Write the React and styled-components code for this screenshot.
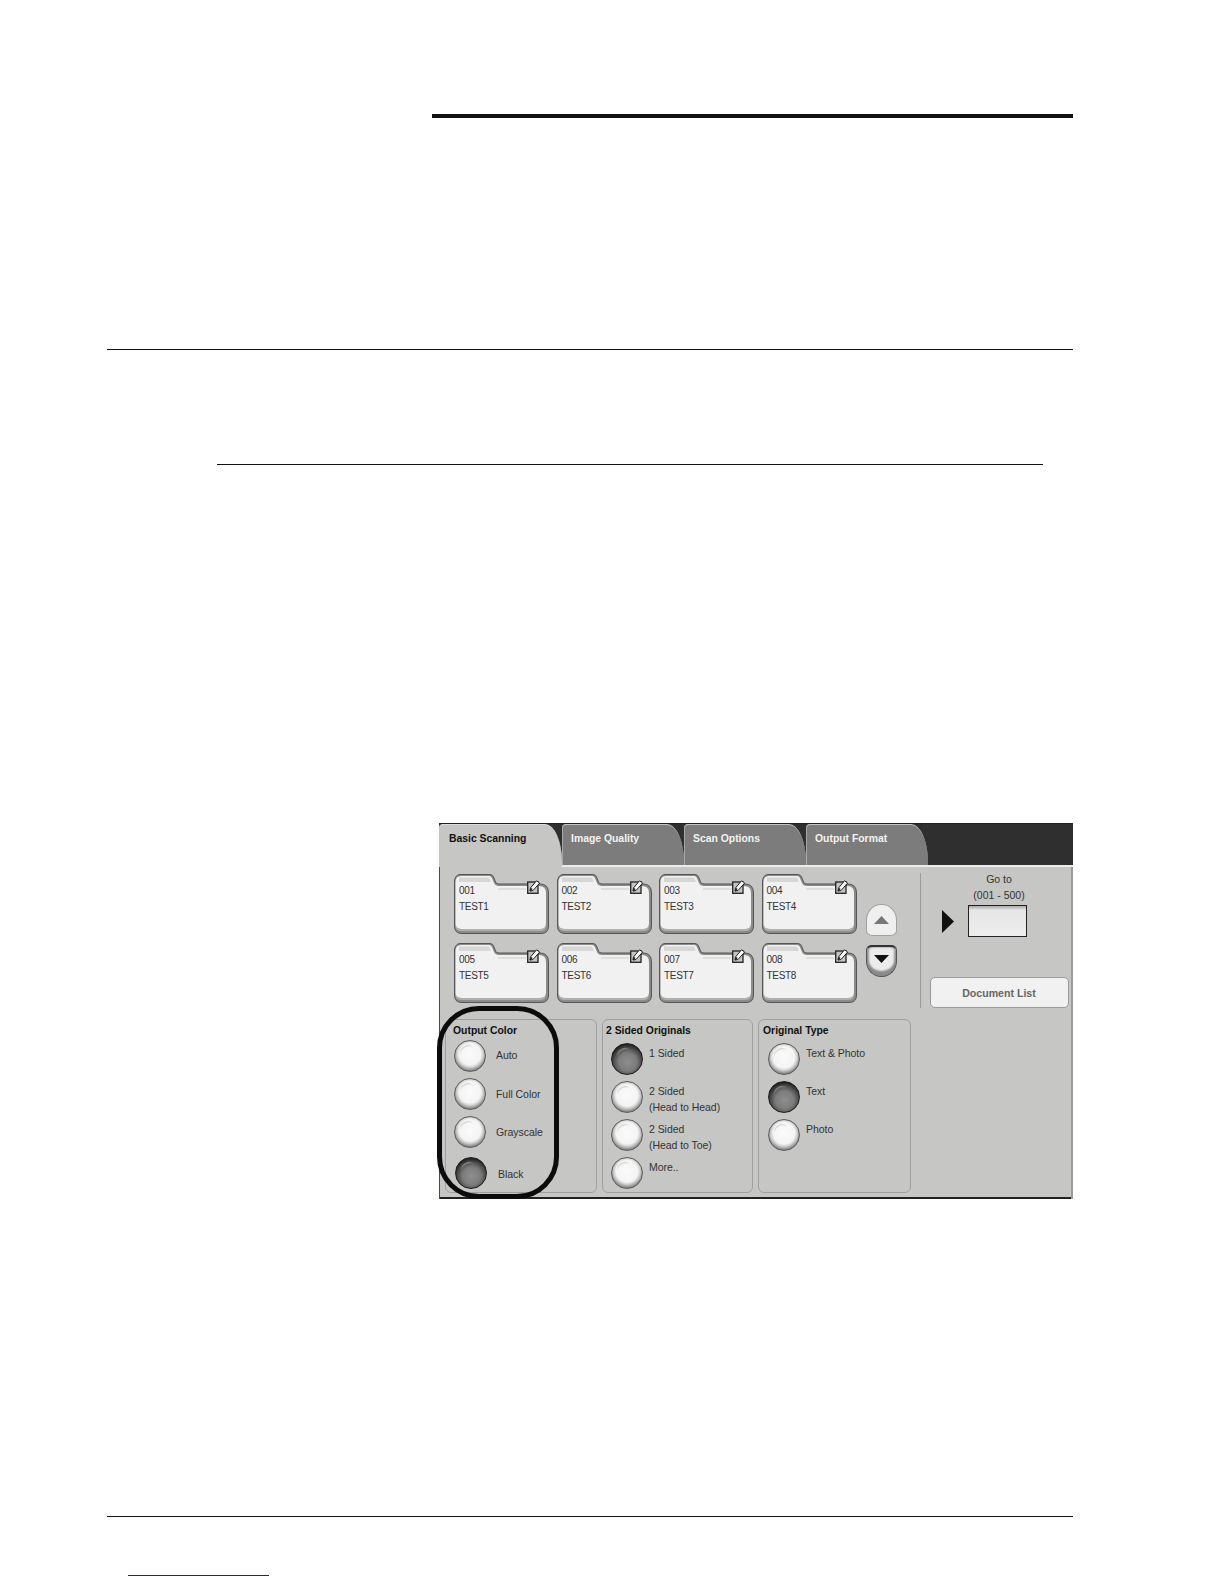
import React from 'react';
import styled, { createGlobalStyle } from 'styled-components';

const TABS = ['Basic Scanning', 'Image Quality', 'Scan Options', 'Output Format'];

const FOLDERS = [
  ['001', 'TEST1'],
  ['002', 'TEST2'],
  ['003', 'TEST3'],
  ['004', 'TEST4'],
  ['005', 'TEST5'],
  ['006', 'TEST6'],
  ['007', 'TEST7'],
  ['008', 'TEST8'],
];

const GROUPS = [
  {
    title: 'Output Color',
    width: 152,
    titleLeft: 7,
    listLeft: 1,
    listTop: 2,
    gap: 10,
    rows: [
      { label: ['Auto'], height: 38, labelTop: 7 },
      { label: ['Full Color'], height: 38, labelTop: 8 },
      { label: ['Grayscale'], height: 41, labelTop: 8 },
      { label: ['Black'], height: 32, labelTop: 9, on: true, nudge: 1 },
    ],
  },
  {
    title: '2 Sided Originals',
    width: 151,
    titleLeft: 3,
    listLeft: 5,
    listTop: 5,
    gap: 6,
    rows: [
      { label: ['1 Sided'], height: 38, on: true },
      { label: ['2 Sided', '(Head to Head)'], height: 38 },
      { label: ['2 Sided', '(Head to Toe)'], height: 38 },
      { label: ['More..'], height: 32 },
    ],
  },
  {
    title: 'Original Type',
    width: 153,
    titleLeft: 4,
    listLeft: 5,
    listTop: 5,
    gap: 6,
    rows: [
      { label: ['Text & Photo'], height: 38 },
      { label: ['Text'], height: 38, on: true },
      { label: ['Photo'], height: 38 },
    ],
  },
];

const FolderShape = () => (
  <FolderSvg viewBox="0 0 95 60" aria-hidden="true">
    <path
      d="M0.5 7 Q1 1 6 0.5 L36 0.5 Q39 0.5 40 4 L41.5 8 Q42 10 45 10 L86 10 Q94.5 10 94.5 19 L94.5 52 Q94.5 59.5 87 59.5 L8 59.5 Q0.5 59.5 0.5 52 Z"
      fill="#8c8c8c"
      stroke="#555"
    />
    <path
      d="M1.5 8 Q1.5 2 7 2 L35 2 Q37.5 2 38.5 5.5 L40 9 Q41 12 45 12 L85 12 Q92 12 92 19 L92 50 Q92 55 86 55 L8 55 Q1.5 55 1.5 50 Z"
      fill="#f1f1f1"
    />
    <path d="M5 3.5 L35 3.5 L37 8 L5 8 Z" fill="#d6d6d6" />
    <path d="M44 14 L72 14 L72 16 L44 16 Z" fill="#dedede" />
    <path d="M1.5 50 Q1.5 55 8 55 L86 55 Q92 55 92 50 L92 52 Q92 57 86 57 L8 57 Q1.5 57 1.5 52 Z" fill="#b0b0b0" />
  </FolderSvg>
);

const EditIcon = () => (
  <EditSvg viewBox="0 0 13 14" aria-hidden="true">
    <rect x="0.7" y="2" width="10.3" height="11.3" fill="#c4c4c4" stroke="#222" strokeWidth="1.3" />
    <path d="M3 11 L3.5 8 L9.5 0.8 L12.7 3 L6 10.5 Z" fill="#f9f9f9" stroke="#222" strokeWidth="1" />
    <path d="M3.2 11 L5 8.5" stroke="#222" strokeWidth="1.4" />
  </EditSvg>
);

const App = () => (
  <Page>
    <GlobalStyle />
    <Rule $left={432} $width={641} $height={4} $top={0} />
    <Rule $left={107} $width={966} $height={1} $top={231} />
    <Rule $left={217} $width={826} $height={1} $top={114} />
    <Panel>
      <TabBar>
        {TABS.map((tab, i) => (
          <Tab key={tab} $active={i === 0}>
            {tab}
          </Tab>
        ))}
      </TabBar>
      <Upper>
        <FolderGrid>
          {FOLDERS.map(([num, name]) => (
            <Folder key={num}>
              <FolderShape />
              <EditIcon />
              <FolderLine>{num}</FolderLine>
              <FolderLine>{name}</FolderLine>
            </Folder>
          ))}
        </FolderGrid>
        <Arrows>
          <ArrowUp>
            <svg width="15" height="8" viewBox="0 0 15 8" aria-hidden="true">
              <path d="M7.5 0 L15 8 L0 8 Z" fill="#767676" />
            </svg>
          </ArrowUp>
          <ArrowDown>
            <svg width="15" height="8" viewBox="0 0 15 8" aria-hidden="true">
              <path d="M0 0 L15 0 L7.5 8 Z" fill="#111" />
            </svg>
          </ArrowDown>
        </Arrows>
        <Divider />
        <GoToColumn>
          <GoToLabel>Go to</GoToLabel>
          <GoToLabel>(001 - 500)</GoToLabel>
          <GoToRow>
            <svg width="12" height="23" viewBox="0 0 12 23" aria-hidden="true">
              <path d="M0 0 L12 11.5 L0 23 Z" fill="#111" />
            </svg>
            <GoToBox />
          </GoToRow>
          <ListButton>Document List</ListButton>
        </GoToColumn>
      </Upper>
      <Lower>
        {GROUPS.map((group) => (
          <Group key={group.title} $width={group.width}>
            <GroupTitle $left={group.titleLeft}>{group.title}</GroupTitle>
            <RadioList $left={group.titleLeft + group.listLeft} $top={group.listTop}>
              {group.rows.map((row) => (
                <RadioRow key={row.label.join()} $height={row.height} $nudge={row.nudge} $gap={group.gap}>
                  <Radio $on={row.on} />
                  <RadioLabel $top={row.labelTop}>
                    {row.label.map((line) => (
                      <div key={line}>{line}</div>
                    ))}
                  </RadioLabel>
                </RadioRow>
              ))}
            </RadioList>
          </Group>
        ))}
      </Lower>
      <Highlight />
    </Panel>
    <Rule $left={107} $width={966} $height={1} $top={317} />
    <Rule $left={128} $width={141} $height={1} $top={58} $color="#1c2290" />
  </Page>
);

export default App;

const GlobalStyle = createGlobalStyle`
  body {
    margin: 0;
    background: #fff;
    font-family: "Liberation Sans", Arial, sans-serif;
  }
`;

const Page = styled.div`
  width: 1224px;
  height: 1584px;
  padding-top: 114px;
  box-sizing: border-box;
  overflow: hidden;
`;

const Rule = styled.div`
  width: ${(p) => p.$width}px;
  height: ${(p) => p.$height}px;
  margin: ${(p) => p.$top}px 0 0 ${(p) => p.$left}px;
  background: ${(p) => p.$color || '#111'};
`;

const Panel = styled.div`
  position: relative;
  width: 634px;
  height: 376px;
  margin: 358px 0 0 439px;
  background: #c6c6c4;
  box-shadow: inset 1px 0 #4a4a4a, inset -2px 0 #9a9a9a, inset 0 -2px #222;
`;

const TabBar = styled.div`
  display: flex;
  height: 41px;
  background: #2f2f2f;
  border-bottom: 2px solid #ececec;
  border-top: 1px solid #222;
  box-sizing: content-box;
  margin-bottom: -1px;
`;

const Tab = styled.div`
  width: ${(p) => (p.$active ? 123 : 122)}px;
  height: ${(p) => (p.$active ? 43 : 41)}px;
  padding: 7px 0 0 ${(p) => (p.$active ? 10 : 9)}px;
  box-sizing: border-box;
  border-radius: 4px 17px 0 0 / 4px 38px 0 0;
  background: ${(p) => (p.$active ? '#c6c6c4' : '#7c7c7c')};
  border-top: 1px solid ${(p) => (p.$active ? '#dcdcdc' : '#c4c4c4')};
  box-shadow: ${(p) => (p.$active ? 'none' : 'inset 1px 0 #a8a8a8')};
  color: ${(p) => (p.$active ? '#111' : '#f2f2f2')};
  font-size: 10.4px;
  font-weight: 700;
  line-height: 14px;
  z-index: 1;
`;

const Upper = styled.div`
  display: flex;
  align-items: flex-start;
  height: 135px;
  margin: 7px 0 0 15px;
`;

const FolderGrid = styled.div`
  display: grid;
  grid-template-columns: repeat(4, 95px);
  grid-auto-rows: 60px;
  column-gap: 7.5px;
  row-gap: 9px;
  margin-top: 1px;
`;

const Folder = styled.div`
  position: relative;
  height: 60px;
  padding: 9px 0 0 5px;
  box-sizing: border-box;
`;

const FolderSvg = styled.svg`
  position: absolute;
  inset: 0;
  width: 95px;
  height: 60px;
`;

const EditSvg = styled.svg`
  position: absolute;
  top: 6px;
  left: 73px;
  width: 13px;
  height: 14px;
`;

const FolderLine = styled.div`
  position: relative;
  color: #333;
  font-size: 10px;
  line-height: 16px;
  letter-spacing: -0.3px;
`;

const Arrows = styled.div`
  display: flex;
  flex-direction: column;
  gap: 9px;
  margin: 31px 0 0 9px;
`;

const ArrowUp = styled.div`
  display: flex;
  align-items: center;
  justify-content: center;
  width: 31px;
  height: 32px;
  box-sizing: border-box;
  border: 1px solid #a0a0a0;
  border-radius: 15px 15px 7px 7px / 16px 16px 5px 5px;
  background: #efefef;
`;

const ArrowDown = styled.div`
  display: flex;
  align-items: center;
  justify-content: center;
  width: 31px;
  height: 32px;
  padding-bottom: 5px;
  box-sizing: border-box;
  border: 1px solid #555;
  border-top: 2px solid #333;
  border-radius: 6px 6px 15px 15px / 5px 5px 16px 16px;
  background: #ececec;
  box-shadow: inset 0 -5px 2px #8a8a8a, inset 2px 0 2px #9a9a9a, inset -2px 0 2px #9a9a9a;
`;

const Divider = styled.div`
  width: 1px;
  height: 135px;
  margin-left: 23px;
  background: #9c9c9c;
`;

const GoToColumn = styled.div`
  display: flex;
  flex-direction: column;
  width: 139px;
  margin: -2px 0 0 9px;
`;

const GoToLabel = styled.div`
  color: #333;
  font-size: 10.5px;
  line-height: 16px;
  text-align: center;
`;

const GoToRow = styled.div`
  display: flex;
  align-items: center;
  gap: 14px;
  margin: 2px 0 0 12px;
`;

const GoToBox = styled.div`
  width: 59px;
  height: 32px;
  box-sizing: border-box;
  border: 1px solid #222;
  background: linear-gradient(#a8a8a8 0, #e6e6e6 4px, #ededed 100%);
`;

const ListButton = styled.div`
  display: flex;
  align-items: center;
  justify-content: center;
  height: 31px;
  margin-top: 40px;
  box-sizing: border-box;
  border: 1px solid #9a9a9a;
  border-radius: 5px;
  background: #f1f1f1;
  color: #666;
  font-size: 10.6px;
  font-weight: 700;
`;

const Lower = styled.div`
  display: flex;
  gap: 5px;
  margin: 11px 0 0 6px;
`;

const Group = styled.div`
  width: ${(p) => p.$width}px;
  height: 174px;
  padding-top: 4px;
  box-sizing: border-box;
  border: 1px solid #a0a0a0;
  border-radius: 6px;
`;

const GroupTitle = styled.div`
  padding-left: ${(p) => p.$left}px;
  color: #111;
  font-size: 10.4px;
  font-weight: 700;
  line-height: 14px;
`;

const RadioList = styled.div`
  display: flex;
  flex-direction: column;
  margin: ${(p) => p.$top}px 0 0 ${(p) => p.$left}px;
`;

const RadioRow = styled.div`
  display: flex;
  align-items: flex-start;
  gap: ${(p) => p.$gap + (p.$nudge || 0)}px;
  height: ${(p) => p.$height}px;
  margin-left: ${(p) => p.$nudge || 0}px;
`;

const Radio = styled.div`
  position: relative;
  flex: none;
  width: 32px;
  height: 32px;
  box-sizing: border-box;
  border: 1px solid ${(p) => (p.$on ? '#1e1e1e' : '#5e5e5e')};
  border-radius: 50%;
  background: ${(p) =>
    p.$on
      ? 'radial-gradient(circle 20px at 52% 60%, #8e8e8e 0, #7c7c7c 45%, #505050 68%, #1c1c1c 90%)'
      : 'radial-gradient(circle 18px at 50% 44%, #fbfbfb 0, #f4f4f4 60%, #d2d2d2 72%, #929292 88%, #666 100%)'};
  &::after {
    content: '';
    position: absolute;
    top: 4px;
    left: 5px;
    width: 14px;
    height: 10px;
    border-top: 2px solid ${(p) => (p.$on ? '#7a7a7a' : '#dcdcdc')};
    border-radius: 50%;
    transform: rotate(-28deg);
  }
`;

const RadioLabel = styled.div`
  padding-top: ${(p) => p.$top ?? 2}px;
  color: #333;
  font-size: 10.5px;
  line-height: 16px;
  letter-spacing: -0.05px;
`;

const Highlight = styled.div`
  position: absolute;
  top: 183px;
  left: -2px;
  width: 122px;
  height: 193px;
  box-sizing: border-box;
  border: 5px solid #0c0c0c;
  border-radius: 42px;
`;
